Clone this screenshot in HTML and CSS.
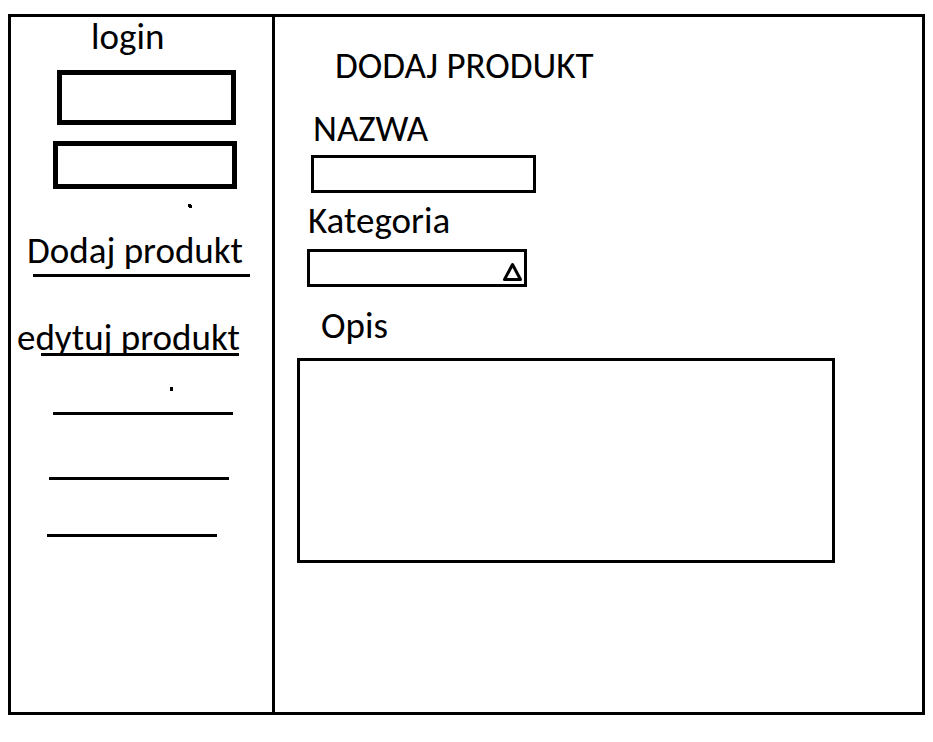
FILE: index.html
```html
<!DOCTYPE html>
<html lang="pl">
<head>
  <meta charset="utf-8">
  <meta name="viewport" content="width=device-width, initial-scale=1">
  <title>Dodaj produkt</title>
  <link rel="stylesheet" href="styles.css">
</head>
<body>
  <div class="frame">
    <aside class="sidebar">
      <form class="login">
        <label class="login-label" for="login">login</label>
        <input class="login-box login-name" id="login" type="text">
        <input class="login-box login-password" type="password" aria-label="hasło">
      </form>
      <svg class="dot dot-login" width="4" height="4" viewBox="0 0 4 4" shape-rendering="crispEdges" aria-hidden="true">
        <path d="M0 0h3v1h1v3H1V3H0z"/>
      </svg>
      <nav class="menu">
        <a class="link link-add" href="#dodaj">Dodaj produkt</a>
        <hr class="rule rule-add">
        <a class="link link-edit" href="#edytuj">edytuj produkt</a>
        <hr class="rule rule-edit">
        <svg class="dot dot-menu" width="3" height="4" viewBox="0 0 3 4" shape-rendering="crispEdges" aria-hidden="true">
          <path d="M0 0h3v4H0z"/>
        </svg>
        <hr class="rule rule-first">
        <hr class="rule rule-second">
        <hr class="rule rule-third">
      </nav>
    </aside>
    <main class="content">
      <h1 class="title">DODAJ PRODUKT</h1>
      <form class="product">
        <label class="label label-name" for="name">NAZWA</label>
        <input class="field name" id="name" type="text">
        <label class="label label-category" for="category">Kategoria</label>
        <div class="category">
          <select class="field category-select" id="category"><option></option></select>
          <svg class="arrow" width="20" height="20" viewBox="0 0 20 20" aria-hidden="true">
            <path d="M10.500 2.500 2.500 17.500h16z"/>
          </svg>
        </div>
        <label class="label label-description" for="description">Opis</label>
        <textarea class="field description" id="description"></textarea>
      </form>
    </main>
  </div>
</body>
</html>
```
FILE: styles.css
```css
* {
  box-sizing: border-box;
}

body {
  margin: 0;
  padding: 14px 8px 27px;
  background: #fff;
  color: #000;
  font-family: Carlito, Lato, sans-serif;
  font-size: 37px;
  line-height: 40px;
}

.frame {
  display: grid;
  grid-template-columns: 264px 1fr;
  min-height: calc(100vh - 41px);
  border: 3px solid #000;
}

.sidebar {
  border-right: 3px solid #000;
}

.login,
.menu,
.product {
  display: flex;
  flex-direction: column;
  align-items: flex-start;
}

.login-label {
  margin-left: 80px;
}

.login-box {
  padding: 0 8px;
  border: 5px solid #000;
  border-radius: 0;
  background: #fff;
  font: inherit;
  font-size: 24px;
}

.login-name {
  width: 179px;
  height: 55px;
  margin: 13px 0 0 46px;
}

.login-password {
  width: 184px;
  height: 48px;
  margin: 16px 0 0 42px;
}

.dot {
  display: block;
}

.dot-login {
  margin: 15px 0 0 177px;
}

.dot-menu {
  margin: 31px 0 0 159px;
}

.menu {
  margin-top: 23px;
}

.link {
  color: inherit;
  text-decoration: none;
  white-space: nowrap;
}

.link-add {
  margin-left: 16px;
}

.link-edit {
  margin: 41px 0 0 6px;
}

.rule {
  width: 180px;
  height: 3px;
  margin: 0;
  border: 0;
  background: #000;
}

.rule-add {
  width: 217px;
  margin: 3px 0 0 22px;
}

/* This rule runs over the descenders of its link and hides them below it. */
.rule-edit {
  position: relative;
  width: 198px;
  margin: -5px 0 0 30px;
  box-shadow: 0 3px #fff, 0 6px #fff, 0 8px #fff;
}

.rule-first {
  margin: 21px 0 0 42px;
}

.rule-second {
  margin: 62px 0 0 38px;
}

.rule-third {
  width: 170px;
  margin: 54px 0 0 36px;
}

.title {
  margin: 29px 0 0 60px;
  font: inherit;
}

.field {
  display: block;
  padding: 0 8px;
  border: 3px solid #000;
  border-radius: 0;
  background: #fff;
  color: inherit;
  font: inherit;
  font-size: 24px;
}

.label-name {
  margin: 23px 0 0 38px;
}

.name {
  width: 225px;
  height: 38px;
  margin: 6px 0 0 36px;
}

.label-category {
  margin: 8px 0 0 33px;
}

.category {
  position: relative;
  width: 220px;
  margin: 8px 0 0 32px;
}

.category-select {
  width: 100%;
  height: 38px;
  appearance: none;
}

.arrow {
  position: absolute;
  right: 5px;
  bottom: 5px;
  fill: none;
  stroke: #000;
  stroke-width: 3;
  stroke-linejoin: round;
  pointer-events: none;
}

.label-description {
  margin: 19px 0 0 46px;
}

.description {
  align-self: stretch;
  height: 205px;
  margin: 12px 87px 0 22px;
  resize: none;
}
```
